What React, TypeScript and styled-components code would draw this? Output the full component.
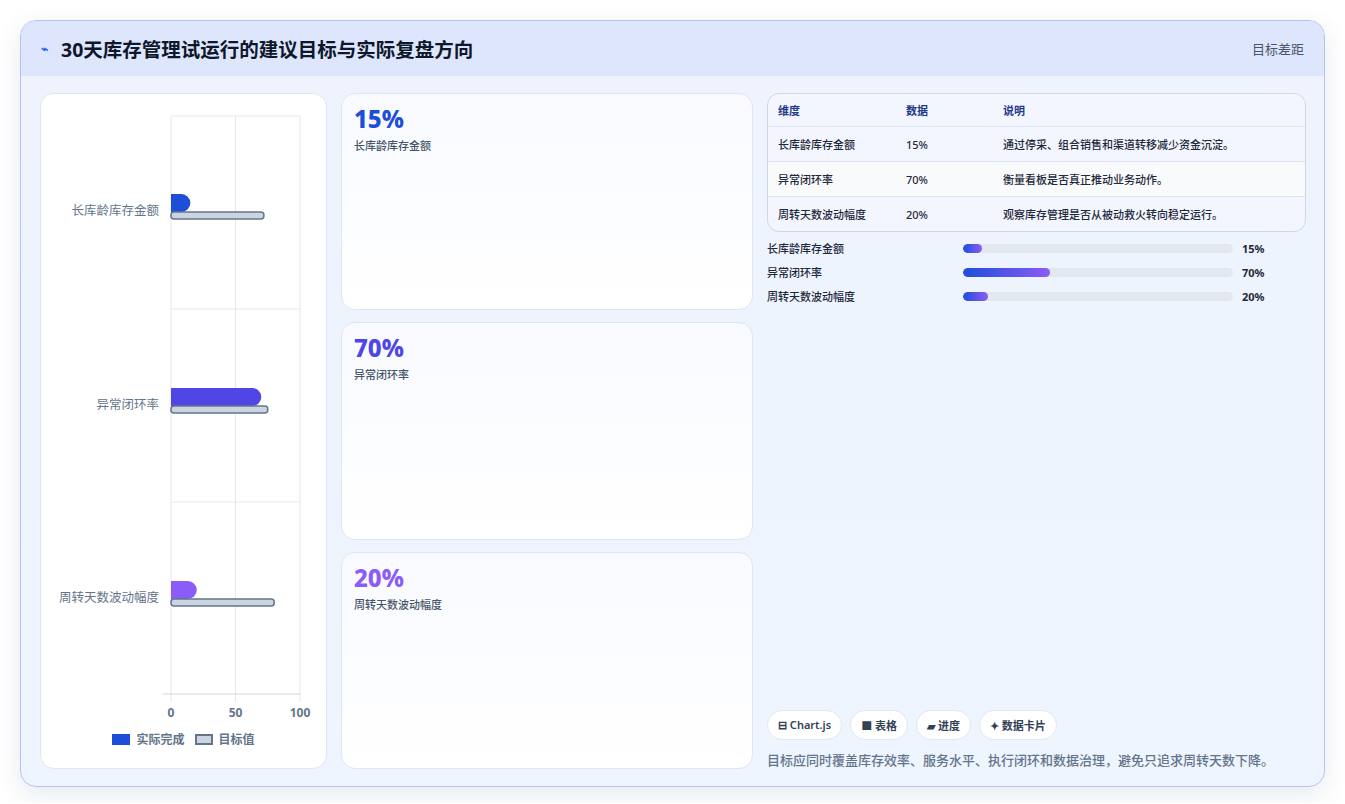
import React from "react";
import styled, { createGlobalStyle } from "styled-components";

const G = createGlobalStyle`
  body{margin:0;background:#fff;font-family:"Noto Sans","Noto Sans CJK SC",sans-serif;}
`;
const Page = styled.div`padding:20px 20px 16px 20px;`;
const Card = styled.div`
  height:767px;box-sizing:border-box;border:1px solid #b6c3ea;border-radius:16px;overflow:hidden;
  background:linear-gradient(180deg,#eef3fe,#eef5fe);display:flex;flex-direction:column;
  box-shadow:0 8px 24px rgba(60,80,140,0.12);
`;
const Header = styled.div`
  height:55px;flex:none;background:#dde6fd;display:flex;align-items:center;justify-content:space-between;padding:0 20px;
`;
const Title = styled.div`font-size:19.5px;font-weight:700;color:#0f172a;display:flex;align-items:center;gap:13px;`;
const Small = styled.span`font-size:13px;color:#475569;`;
const Body = styled.div`flex:1;display:grid;grid-template-columns:287px 412px 1fr;gap:14px;padding:17px 18px 18px 19px;min-height:0;`;
const Panel = styled.div`background:#fff;border:1px solid #e0e6f1;border-radius:14px;`;
const ChartPanel = styled(Panel)`display:flex;flex-direction:column;align-items:center;padding-bottom:20px;`;
const Legend = styled.div`display:flex;gap:10px;font-size:12px;color:#64748b;font-weight:600;align-items:center;`;
const Sw = styled.span<{ $c: string; $b: string }>`display:inline-block;width:18px;height:11px;background:${p => p.$c};border:2px solid ${p => p.$b};box-sizing:border-box;margin-right:6px;vertical-align:-1px;`;
const Mid = styled.div`display:grid;grid-template-rows:1fr 1fr 1fr;gap:12px;`;
const Metric = styled(Panel)`padding:11px 12px;background:linear-gradient(180deg,#f8faff,#fff);`;
const Big = styled.div<{ $c: string }>`font-size:24px;font-weight:800;color:${p => p.$c};line-height:28px;`;
const MLabel = styled.div`font-size:11px;color:#475569;margin-top:4px;font-weight:500;`;
const Right = styled.div`display:flex;flex-direction:column;`;
const Table = styled.div`border:1px solid #cdd6ea;border-radius:12px;overflow:hidden;background:#f3f6fe;`;
const Row = styled.div<{ $h?: boolean; $alt?: boolean }>`
  display:grid;grid-template-columns:128px 97px 1fr;padding:0 10px;height:${p => (p.$h ? 32 : 34)}px;align-items:center;
  font-size:11px;font-weight:${p => (p.$h ? 700 : 500)};color:${p => (p.$h ? "#1e3a8a" : "#1e293b")};
  background:${p => (p.$alt ? "#f8fafc" : "transparent")};
  border-top:${p => (p.$h ? "none" : "1px solid #dde3f0")};
`;
const Bars = styled.div`display:flex;flex-direction:column;gap:9px;margin-top:8px;`;
const BarRow = styled.div`display:grid;grid-template-columns:196px 270px 1fr;align-items:center;font-size:11px;color:#1e293b;font-weight:500;height:15px;`;
const Track = styled.div`height:9px;border-radius:5px;background:#e2e8f0;overflow:hidden;`;
const Fill = styled.div`height:100%;border-radius:5px;background:linear-gradient(90deg,#1d4ed8,#8b5cf6);`;
const Pct = styled.span`font-weight:700;margin-left:9px;`;
const Chips = styled.div`margin-top:auto;display:flex;gap:8px;`;
const Chip = styled.span`font-size:11px;font-weight:600;color:#334155;background:#fff;border:1px solid #e2e8f0;border-radius:15px;padding:6px 10px;`;
const Foot = styled.div`font-size:13px;color:#64748b;margin-top:10px;font-weight:500;`;

const cats = [
  { n: "长库龄库存金额", a: 15, t: 72, c: "#1d4ed8", y: 117 },
  { n: "异常闭环率", a: 70, t: 75, c: "#4f46e5", y: 311 },
  { n: "周转天数波动幅度", a: 20, t: 80, c: "#8b5cf6", y: 504 },
];

function Chart() {
  const x0 = 131, s = 1.29;
  return (
    <svg width="287" height="636" viewBox="0 0 287 636" style={{ fontFamily: "Noto Sans,Noto Sans CJK SC,sans-serif" }}>
      {[0, 50, 100].map(v => (
        <line key={v} x1={x0 + v * s} x2={x0 + v * s} y1="22" y2="608" stroke="#e5e7eb" />
      ))}
      {[22, 215, 408].map(y => <line key={y} x1={x0} x2={x0 + 129} y1={y} y2={y} stroke="#e5e7eb" />)}
      <line x1={x0 - 8} x2={x0 + 129} y1="600" y2="600" stroke="#d1d5db" />
      {cats.map(c => (
        <g key={c.n}>
          <text x={x0 - 12} y={c.y + 4} textAnchor="end" fontSize="12.5" fill="#64748b">{c.n}</text>
          <path d={`M${x0} ${c.y - 17}H${x0 + c.a * s - 9}a9 9 0 0 1 0 18H${x0}Z`} fill={c.c} />
          <rect x={x0} y={c.y + 1} width={c.t * s} height="7" rx="3" fill="#cbd5e1" stroke="#64748b" strokeWidth="1.5" />
        </g>
      ))}
      {[0, 50, 100].map(v => (
        <text key={v} x={x0 + v * s} y="623" textAnchor="middle" fontSize="12" fontWeight="700" fill="#64748b">{v}</text>
      ))}
    </svg>
  );
}

export default function App() {
  return (
    <Page>
      <G />
      <Card>
        <Header>
          <Title><span style={{ color: "#2563eb", fontSize: 12 }}>⌁</span>30天库存管理试运行的建议目标与实际复盘方向</Title>
          <Small>目标差距</Small>
        </Header>
        <Body>
          <ChartPanel>
            <Chart />
            <Legend>
              <span><Sw $c="#1d4ed8" $b="#1d4ed8" />实际完成</span>
              <span><Sw $c="#cbd5e1" $b="#64748b" />目标值</span>
            </Legend>
          </ChartPanel>
          <Mid>
            {cats.map(c => (
              <Metric key={c.n}><Big $c={c.c}>{c.a}%</Big><MLabel>{c.n}</MLabel></Metric>
            ))}
          </Mid>
          <Right>
            <Table>
              <Row $h><span>维度</span><span>数据</span><span>说明</span></Row>
              <Row><span>长库龄库存金额</span><span>15%</span><span>通过停采、组合销售和渠道转移减少资金沉淀。</span></Row>
              <Row $alt><span>异常闭环率</span><span>70%</span><span>衡量看板是否真正推动业务动作。</span></Row>
              <Row><span>周转天数波动幅度</span><span>20%</span><span>观察库存管理是否从被动救火转向稳定运行。</span></Row>
            </Table>
            <Bars>
              {cats.map(c => (
                <BarRow key={c.n}><span>{c.n}</span><Track><Fill style={{ width: `${c.a * 0.46}%` }} /></Track><Pct>{c.a}%</Pct></BarRow>
              ))}
            </Bars>
            <Chips>
              <Chip>⊟ Chart.js</Chip><Chip>■ 表格</Chip><Chip>▰ 进度</Chip><Chip>✦ 数据卡片</Chip>
            </Chips>
            <Foot>目标应同时覆盖库存效率、服务水平、执行闭环和数据治理，避免只追求周转天数下降。</Foot>
          </Right>
        </Body>
      </Card>
    </Page>
  );
}
